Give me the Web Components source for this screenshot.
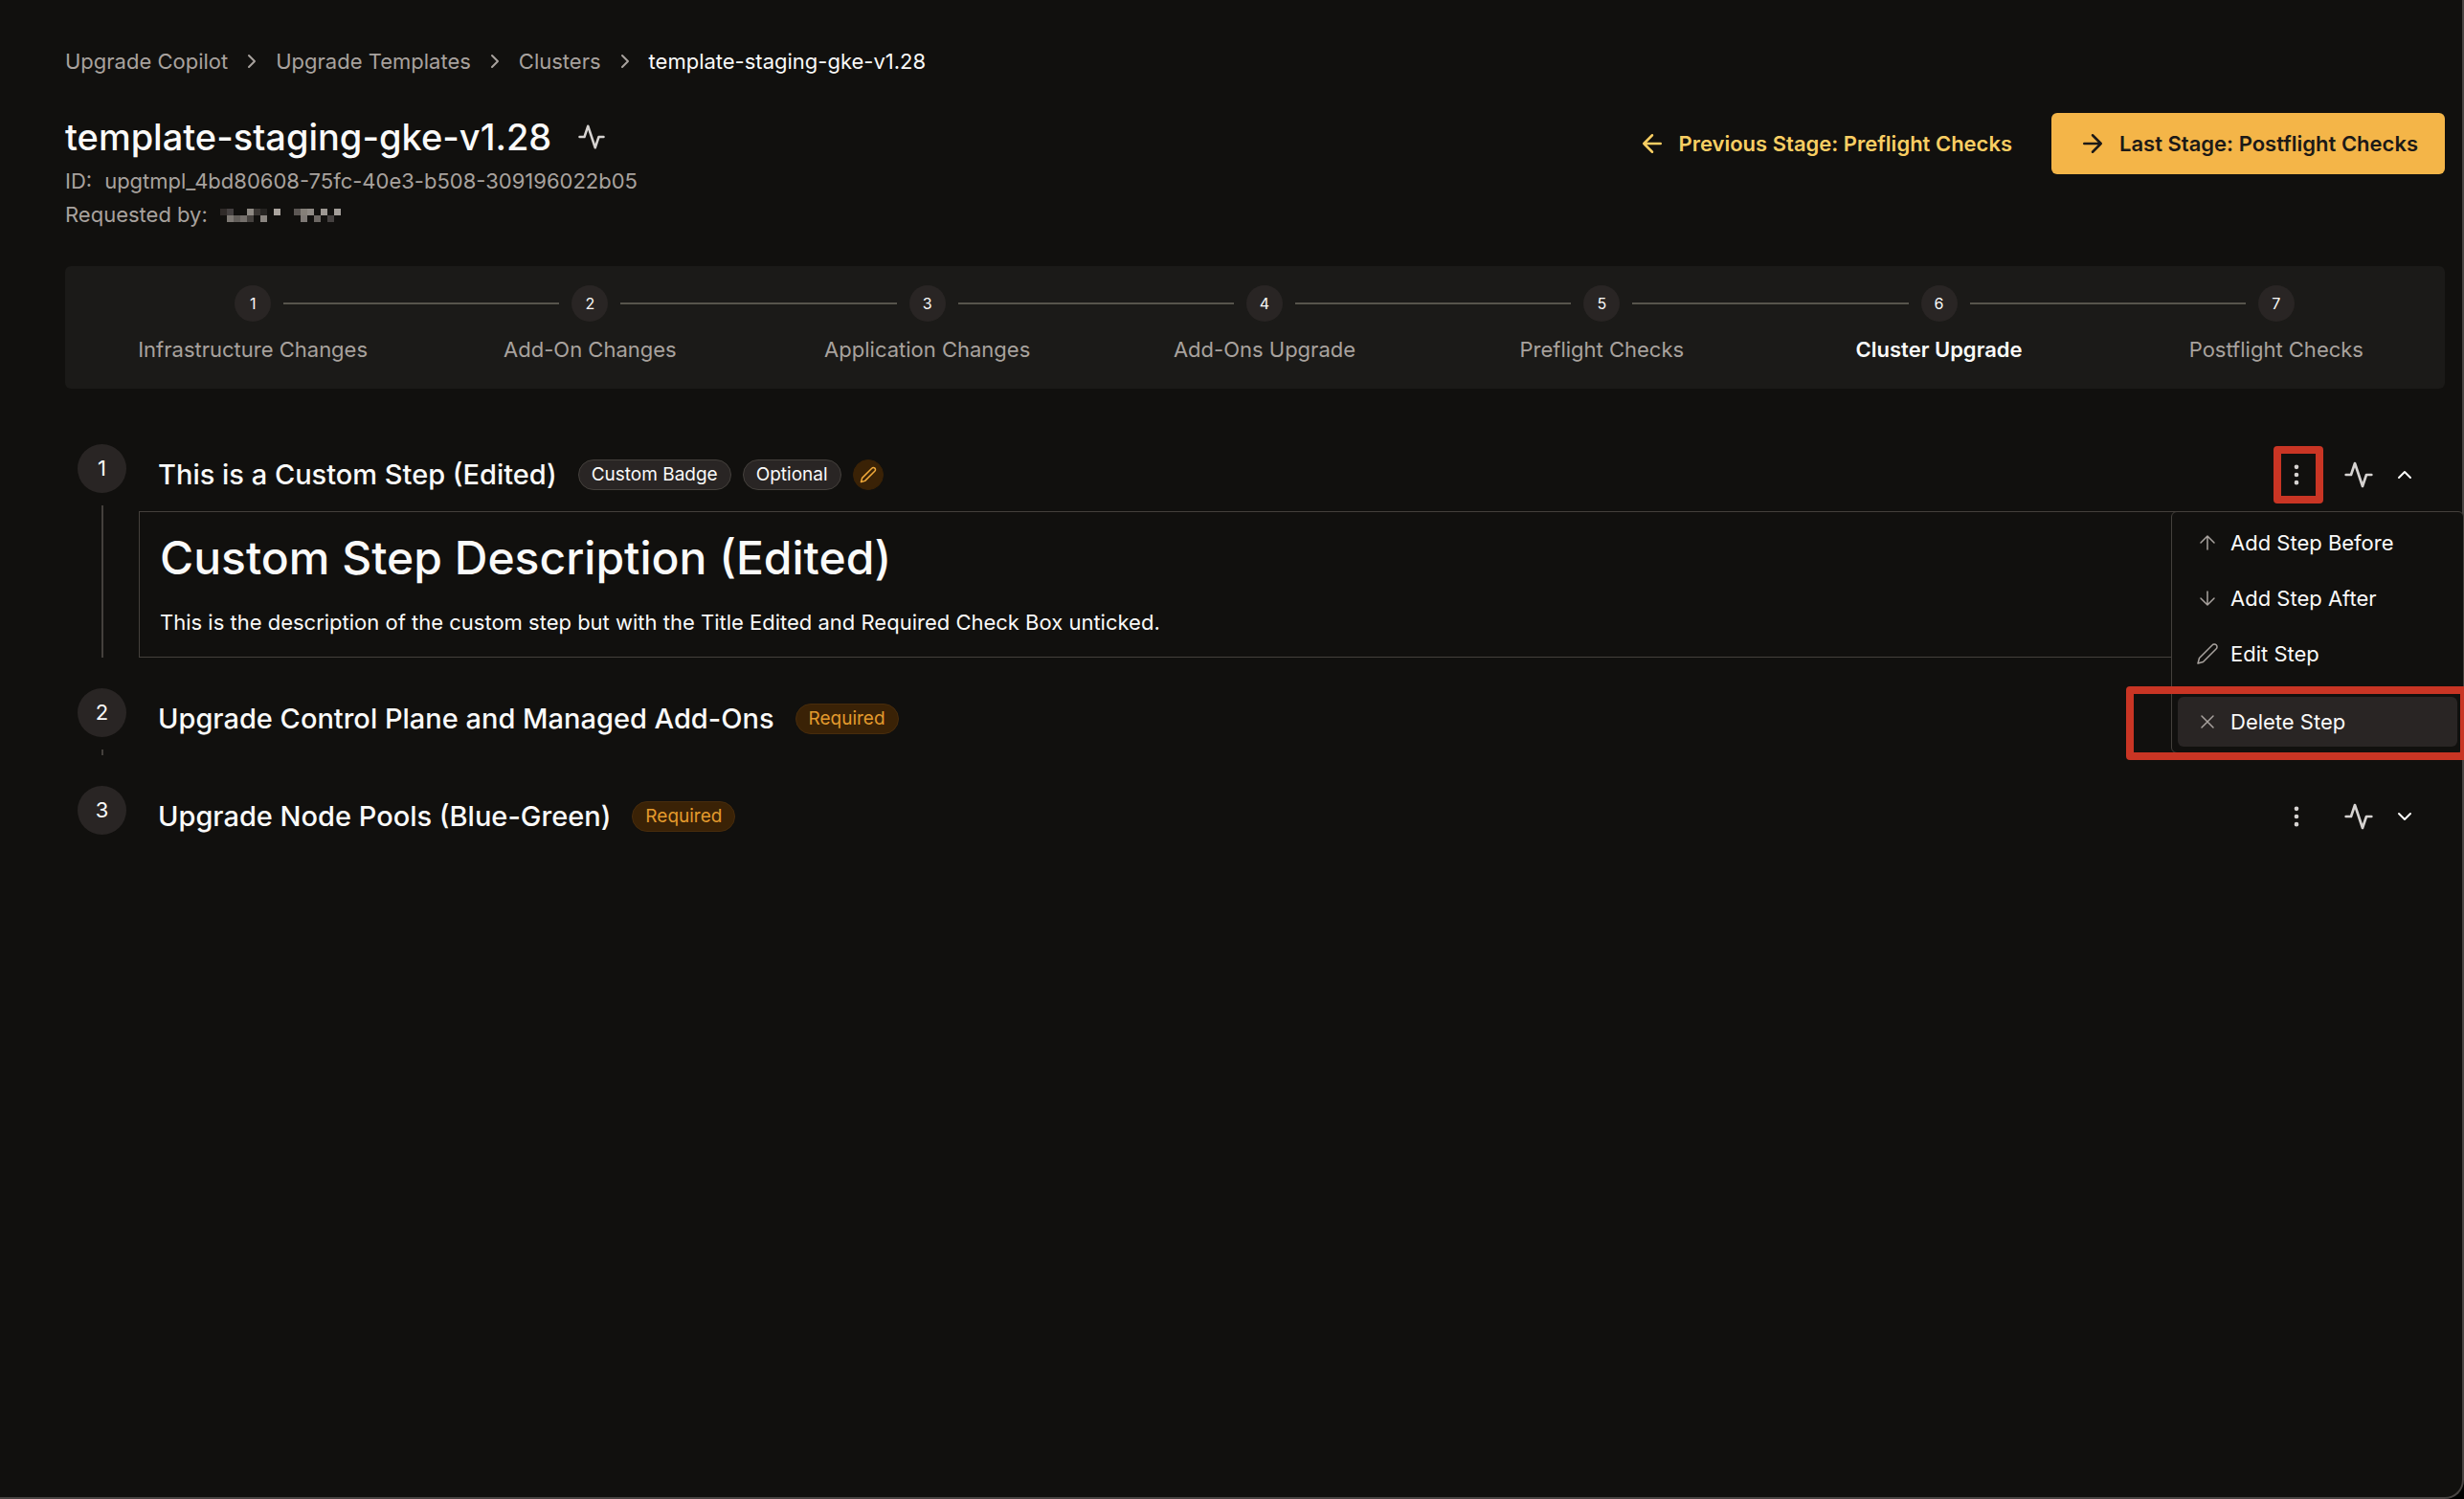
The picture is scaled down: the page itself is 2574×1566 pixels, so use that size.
<!DOCTYPE html>
<html lang="en">
<head>
  <meta charset="utf-8">
  <meta name="viewport" content="width=device-width, initial-scale=1">
  <title>template-staging-gke-v1.28</title>
  <style>
    :root {
      --bg: #11100e;
      --panel: #1b1a18;
      --surface: #292524;
      --border: #44403c;
      --line: #57544c;
      --text: #fafaf9;
      --muted: #a8a29e;
      --soft: #d6d3d1;
      --amber: #f4b548;
      --amber-text: #f9ce63;
      --amber-dark: #3a2206;
      --red: #c93524;
    }
    body {
      margin: 0;
      background: #000;
      color: var(--text);
      font-family: Inter, "Liberation Sans", sans-serif;
      font-size: 22px;
      line-height: 32px;
      overflow-x: hidden;
    }
  </style>
</head>
<body>
  <app-frame>
    <bread-crumbs>
      <a href="#copilot">Upgrade Copilot</a>
      <a href="#templates">Upgrade Templates</a>
      <a href="#clusters">Clusters</a>
      <span>template-staging-gke-v1.28</span>
    </bread-crumbs>

    <template-header template-id="upgtmpl_4bd80608-75fc-40e3-b508-309196022b05">
      <span slot="title">template-staging-gke-v1.28</span>
      <stage-button slot="actions" icon="arrow-left">Previous Stage: Preflight Checks</stage-button>
      <stage-button slot="actions" icon="arrow-right" primary>Last Stage: Postflight Checks</stage-button>
    </template-header>

    <stage-stepper>
      <stage-item number="1" first>Infrastructure Changes</stage-item>
      <stage-item number="2">Add-On Changes</stage-item>
      <stage-item number="3">Application Changes</stage-item>
      <stage-item number="4">Add-Ons Upgrade</stage-item>
      <stage-item number="5">Preflight Checks</stage-item>
      <stage-item number="6" active>Cluster Upgrade</stage-item>
      <stage-item number="7" last>Postflight Checks</stage-item>
    </stage-stepper>

    <step-list>
      <upgrade-step number="1" heading="This is a Custom Step (Edited)" open>
        <step-badge slot="badges">Custom Badge</step-badge>
        <step-badge slot="badges">Optional</step-badge>
        <step-badge slot="badges" variant="icon"><ui-icon name="pencil" size="18"></ui-icon></step-badge>
        <step-menu slot="menu"></step-menu>
        <step-description heading="Custom Step Description (Edited)">This is the description of the custom step but with the Title Edited and Required Check Box unticked.</step-description>
      </upgrade-step>
      <upgrade-step number="2" heading="Upgrade Control Plane and Managed Add-Ons">
        <step-badge slot="badges" variant="required">Required</step-badge>
      </upgrade-step>
      <upgrade-step number="3" heading="Upgrade Node Pools (Blue-Green)" last>
        <step-badge slot="badges" variant="required">Required</step-badge>
      </upgrade-step>
    </step-list>
  </app-frame>

  <script>
    const ICONS = {
      'chevron-right': '<path d="m9 18 6-6-6-6"/>',
      'chevron-up': '<path d="m18 15-6-6-6 6"/>',
      'chevron-down': '<path d="m6 9 6 6 6-6"/>',
      'arrow-left': '<path d="m12 19-7-7 7-7M19 12H5"/>',
      'arrow-right': '<path d="M5 12h14m-7-7 7 7-7 7"/>',
      'arrow-up': '<path d="m5 12 7-7 7 7M12 19V5"/>',
      'arrow-down': '<path d="M12 5v14m7-7-7 7-7-7"/>',
      'activity': '<path d="M22 12h-4l-3 9L9 3l-3 9H2"/>',
      'pencil': '<path d="M17 3a2.85 2.83 0 1 1 4 4L7.5 20.5 2 22l1.500-5.500Z"/>',
      'close': '<path d="M18 6 6 18M6 6l12 12"/>',
      'more': '<circle cx="12" cy="12" r="1"/><circle cx="12" cy="5" r="1"/><circle cx="12" cy="19" r="1"/>'
    };

    class UiIcon extends HTMLElement {
      constructor() {
        super();
        this.attachShadow({ mode: 'open' });
      }

      connectedCallback() {
        const size = this.getAttribute('size') || 24;
        const stroke = this.getAttribute('stroke') || 2;
        this.shadowRoot.innerHTML = `
          <style>
            :host { display: inline-flex; flex: none; }
            svg { display: block; }
          </style>
          <svg width="${size}" height="${size}" viewBox="0 0 24 24" fill="none" stroke="currentColor"
            stroke-width="${stroke}" stroke-linecap="round" stroke-linejoin="round" aria-hidden="true">
            ${ICONS[this.getAttribute('name')]}
          </svg>
        `;
      }
    }

    class AppFrame extends HTMLElement {
      constructor() {
        super();
        this.attachShadow({ mode: 'open' }).innerHTML = `
          <style>
            :host {
              display: block;
              box-sizing: border-box;
              min-height: 100vh;
              padding: 48px 18px 48px 68px;
              background: var(--bg);
              border: solid #484442;
              border-width: 0 2px 2px 0;
              border-bottom-right-radius: 20px;
            }
          </style>
          <slot></slot>
        `;
      }
    }

    class BreadCrumbs extends HTMLElement {
      constructor() {
        super();
        this.attachShadow({ mode: 'open' });
      }

      connectedCallback() {
        const items = [...this.children];
        items.forEach((item, i) => { item.slot = `item-${i}`; });
        this.shadowRoot.innerHTML = `
          <style>
            :host { display: block; }
            nav { display: flex; align-items: center; gap: 13px; color: var(--muted); }
            ::slotted(a) { color: var(--muted); text-decoration: none; }
            ::slotted(span) { color: var(--text); }
          </style>
          <nav aria-label="Breadcrumb">
            ${items.map((_, i) => `<slot name="item-${i}"></slot>`).join('<ui-icon name="chevron-right" size="24"></ui-icon>')}
          </nav>
        `;
      }
    }

    class TemplateHeader extends HTMLElement {
      constructor() {
        super();
        this.attachShadow({ mode: 'open' });
      }

      connectedCallback() {
        this.shadowRoot.innerHTML = `
          <style>
            :host { display: flex; justify-content: space-between; align-items: flex-start; margin-top: 36px; }
            .title { display: flex; align-items: center; gap: 27px; margin-bottom: 2px; color: var(--soft); }
            h1 { margin: 0; font-size: 38px; line-height: 54px; font-weight: 500; color: var(--text); }
            .meta { display: flex; align-items: center; gap: 13px; line-height: 35px; color: var(--muted); }
            .actions { display: flex; gap: 13px; padding-top: 2px; }
          </style>
          <div>
            <div class="title">
              <h1><slot name="title"></slot></h1>
              <ui-icon name="activity" size="30"></ui-icon>
            </div>
            <div class="meta"><span>ID:</span><span>${this.getAttribute('template-id')}</span></div>
            <div class="meta"><span>Requested by:</span><redacted-name></redacted-name></div>
          </div>
          <div class="actions"><slot name="actions"></slot></div>
        `;
      }
    }

    // Requester name is shown as a mosaic: [column, row, colour]
    const MOSAIC = [
      [0, 0, '#302b29'], [1, 0, '#444040'], [4, 0, '#8f8a84'], [5, 0, '#3a3633'], [6, 0, '#262422'],
      [8, 0, '#aaa49e'], [11, 0, '#5c5754'], [12, 0, '#858079'], [13, 0, '#8f8a85'], [15, 0, '#9c9792'], [17, 0, '#a39e99'],
      [1, 1, '#7d7873'], [2, 1, '#625e5a'], [3, 1, '#746f6b'], [4, 1, '#45413e'], [6, 1, '#8a8580'],
      [12, 1, '#7e7975'], [14, 1, '#6d6864'], [16, 1, '#454140']
    ];

    class RedactedName extends HTMLElement {
      constructor() {
        super();
        this.attachShadow({ mode: 'open' }).innerHTML = `
          <style>
            :host { display: inline-flex; }
          </style>
          <svg width="126" height="14" viewBox="0 0 18 2" shape-rendering="crispEdges" aria-hidden="true">
            ${MOSAIC.map(([x, y, fill]) => `<rect x="${x}" y="${y}" width="1" height="1" fill="${fill}"/>`).join('')}
          </svg>
        `;
      }
    }

    class StageButton extends HTMLElement {
      constructor() {
        super();
        this.attachShadow({ mode: 'open' });
      }

      connectedCallback() {
        this.shadowRoot.innerHTML = `
          <style>
            :host { display: block; }
            button {
              display: flex;
              align-items: center;
              gap: 13px;
              height: 64px;
              padding: 0 28px;
              border: 0;
              border-radius: 6px;
              background: transparent;
              color: var(--amber-text);
              font: inherit;
              font-weight: 600;
              cursor: pointer;
            }
            :host([primary]) button { background: var(--amber); color: #1c1917; }
          </style>
          <button type="button">
            <ui-icon name="${this.getAttribute('icon')}" size="30"></ui-icon>
            <slot></slot>
          </button>
        `;
      }
    }

    class StageStepper extends HTMLElement {
      constructor() {
        super();
        this.attachShadow({ mode: 'open' }).innerHTML = `
          <style>
            :host {
              display: grid;
              grid-auto-flow: column;
              grid-auto-columns: 1fr;
              margin-top: 36px;
              padding: 20px 0 25px 20px;
              background: var(--panel);
              border-radius: 6px;
            }
          </style>
          <slot></slot>
        `;
      }
    }

    class StageItem extends HTMLElement {
      constructor() {
        super();
        this.attachShadow({ mode: 'open' });
      }

      connectedCallback() {
        this.shadowRoot.innerHTML = `
          <style>
            :host { display: block; text-align: center; color: var(--muted); }
            .track { display: flex; align-items: center; gap: 13px; margin-bottom: 13px; }
            .track::before, .track::after { content: ""; flex: 1; height: 2px; background: var(--line); }
            :host([first]) .track::before, :host([last]) .track::after { visibility: hidden; }
            .number {
              width: 38px;
              height: 38px;
              border-radius: 50%;
              background: var(--surface);
              color: var(--text);
              font-size: 16px;
              line-height: 38px;
            }
            :host([active]) .label { color: var(--text); font-weight: 600; }
          </style>
          <div class="track"><span class="number">${this.getAttribute('number')}</span></div>
          <div class="label"><slot></slot></div>
        `;
      }
    }

    class StepList extends HTMLElement {
      constructor() {
        super();
        this.attachShadow({ mode: 'open' }).innerHTML = `
          <style>
            :host { display: flex; flex-direction: column; gap: 32px; padding: 58px 12px 0 13px; }
          </style>
          <slot></slot>
        `;
      }
    }

    class UpgradeStep extends HTMLElement {
      constructor() {
        super();
        this.attachShadow({ mode: 'open' });
      }

      connectedCallback() {
        const open = this.hasAttribute('open');
        this.shadowRoot.innerHTML = `
          <style>
            :host { display: grid; grid-template-columns: 51px 1fr; gap: 13px; }
            .rail { display: flex; flex-direction: column; align-items: center; gap: 13px; }
            .rail::after { content: ""; flex: 1; width: 2px; background: var(--border); }
            :host([last]) .rail::after { visibility: hidden; }
            .number {
              width: 51px;
              height: 51px;
              border-radius: 50%;
              background: var(--surface);
              line-height: 51px;
              text-align: center;
            }
            header { display: flex; align-items: center; height: 64px; padding: 0 18px 0 20px; margin-bottom: 6px; }
            h2 { margin: 0 22px 0 0; font-size: 29px; line-height: 40px; font-weight: 500; }
            .badges { display: flex; gap: 12px; }
            .actions { display: flex; align-items: center; margin-left: auto; color: var(--soft); }
            .more { position: relative; margin-right: 23px; }
            button {
              display: flex;
              align-items: center;
              justify-content: center;
              padding: 0;
              border: 0;
              background: none;
              color: inherit;
              cursor: pointer;
            }
            .more button { width: 52px; height: 60px; }
            .toggle { margin-left: 20px; color: var(--text); }
            .marker {
              position: absolute;
              inset: 0 -2px 0 2px;
              border: 8px solid var(--red);
              border-radius: 4px;
              pointer-events: none;
            }
          </style>
          <div class="rail"><span class="number">${this.getAttribute('number')}</span></div>
          <div>
            <header>
              <h2>${this.getAttribute('heading')}</h2>
              <div class="badges"><slot name="badges"></slot></div>
              <div class="actions">
                <div class="more">
                  <button type="button" aria-label="More actions"><ui-icon name="more" size="28"></ui-icon></button>
                  ${open ? '<span class="marker"></span>' : ''}
                  <slot name="menu"></slot>
                </div>
                <button type="button" aria-label="Activity"><ui-icon name="activity" size="32"></ui-icon></button>
                <button type="button" class="toggle" aria-label="Toggle step">
                  <ui-icon name="chevron-${open ? 'up' : 'down'}" size="24"></ui-icon>
                </button>
              </div>
            </header>
            <slot></slot>
          </div>
        `;
      }
    }

    class StepBadge extends HTMLElement {
      constructor() {
        super();
        this.attachShadow({ mode: 'open' }).innerHTML = `
          <style>
            :host {
              display: inline-flex;
              align-items: center;
              justify-content: center;
              box-sizing: border-box;
              height: 32px;
              padding: 0 13px;
              border: 1px solid var(--border);
              border-radius: 16px;
              background: var(--surface);
              font-size: 19px;
              line-height: 30px;
            }
            :host([variant]) { background: var(--amber-dark); border-color: #482c0c; color: #e39a2d; }
            :host([variant="icon"]) { width: 32px; padding: 0; border-color: var(--amber-dark); color: #f0a93a; }
          </style>
          <slot></slot>
        `;
      }
    }

    class StepDescription extends HTMLElement {
      constructor() {
        super();
        this.attachShadow({ mode: 'open' });
      }

      connectedCallback() {
        this.shadowRoot.innerHTML = `
          <style>
            :host { display: block; padding: 19px 21px 18px; border: 1px solid var(--border); }
            h3 { margin: 0 0 20px; font-size: 48px; line-height: 58px; font-weight: 500; }
            p { margin: 0; line-height: 36px; }
          </style>
          <h3>${this.getAttribute('heading')}</h3>
          <p><slot></slot></p>
        `;
      }
    }

    class StepMenu extends HTMLElement {
      constructor() {
        super();
        this.attachShadow({ mode: 'open' }).innerHTML = `
          <style>
            :host {
              position: absolute;
              z-index: 10;
              top: 68px;
              right: -149px;
              display: flex;
              flex-direction: column;
              gap: 6px;
              box-sizing: border-box;
              width: 306px;
              padding: 6px;
              border: 1px solid var(--border);
              border-radius: 6px;
              background: var(--bg);
              color: var(--text);
            }
            button {
              position: relative;
              display: flex;
              align-items: center;
              gap: 12px;
              height: 52px;
              padding: 0 19px;
              border: 0;
              border-radius: 6px;
              background: none;
              color: inherit;
              font: inherit;
              cursor: pointer;
            }
            ui-icon { color: var(--muted); }
            hr { width: 100%; height: 1px; margin: 3px 0; border: 0; background: var(--border); }
            .selected { background: var(--surface); }
            .marker {
              position: absolute;
              inset: -11px -11px -14px -54px;
              border: 8px solid var(--red);
              border-radius: 4px;
              pointer-events: none;
            }
          </style>
          <button type="button"><ui-icon name="arrow-up" stroke="1.5"></ui-icon>Add Step Before</button>
          <button type="button"><ui-icon name="arrow-down" stroke="1.5"></ui-icon>Add Step After</button>
          <button type="button"><ui-icon name="pencil" stroke="1.5"></ui-icon>Edit Step</button>
          <hr>
          <button type="button" class="selected"><ui-icon name="close" stroke="1.5"></ui-icon>Delete Step<span class="marker"></span></button>
        `;
      }
    }

    customElements.define('ui-icon', UiIcon);
    customElements.define('app-frame', AppFrame);
    customElements.define('bread-crumbs', BreadCrumbs);
    customElements.define('redacted-name', RedactedName);
    customElements.define('template-header', TemplateHeader);
    customElements.define('stage-button', StageButton);
    customElements.define('stage-stepper', StageStepper);
    customElements.define('stage-item', StageItem);
    customElements.define('step-list', StepList);
    customElements.define('step-badge', StepBadge);
    customElements.define('step-description', StepDescription);
    customElements.define('step-menu', StepMenu);
    customElements.define('upgrade-step', UpgradeStep);
  </script>
</body>
</html>
